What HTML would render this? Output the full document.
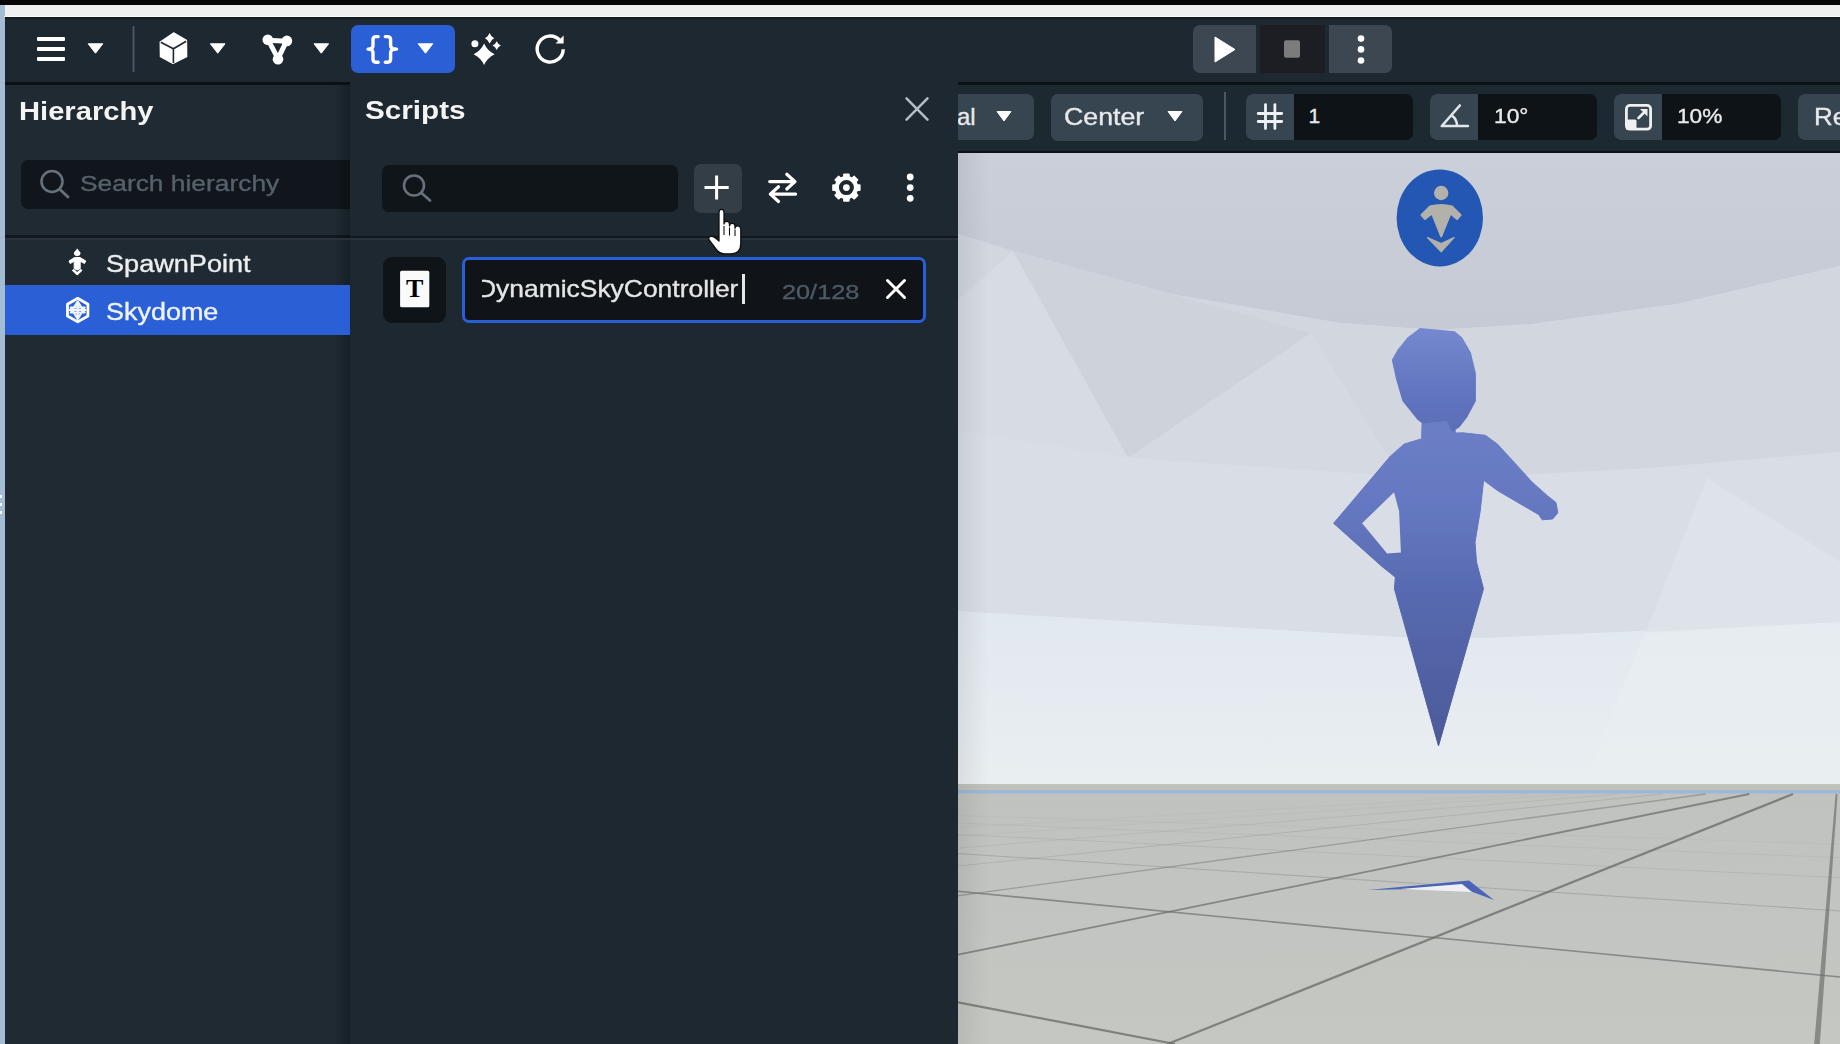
<!DOCTYPE html>
<html><head><meta charset="utf-8">
<style>
*{margin:0;padding:0;box-sizing:border-box}
html,body{width:1840px;height:1044px;overflow:hidden;background:#1e2931;font-family:"Liberation Sans",sans-serif;color:#fff}
.a{position:absolute}
.t{position:absolute;white-space:nowrap;line-height:1;transform-origin:0 0}
svg.i{position:absolute;overflow:visible}
</style></head><body>
<div class="a" style="left:0;top:0;width:1840px;height:5px;background:#060606"></div>
<div class="a" style="left:4px;top:5px;width:1836px;height:12px;background:#efefef"></div>
<div class="a" style="left:0;top:5px;width:5px;height:1039px;background:#a5bcd5"></div>
<div class="a" style="left:0;top:495px;width:2px;height:2.5px;background:#f4f6f8"></div>
<div class="a" style="left:0;top:503px;width:2px;height:2.5px;background:#f4f6f8"></div>
<div class="a" style="left:0;top:511px;width:2px;height:2.5px;background:#f4f6f8"></div>
<div class="a" style="left:5px;top:17px;width:1835px;height:65px;background:#1d2830"></div>
<div class="a" style="left:4px;top:15.5px;width:1836px;height:1.5px;background:#fafafa"></div>
<div class="a" style="left:5px;top:17px;width:1835px;height:1.5px;background:#151d23"></div>
<div class="a" style="left:5px;top:82px;width:345px;height:962px;background:#1f2a32"></div>
<div class="a" style="left:5px;top:82px;width:345px;height:3px;background:#0c1115"></div>
<div class="a" style="left:21px;top:160px;width:329px;height:49px;background:#10161b;border-radius:7px 0 0 7px"></div>
<div class="a" style="left:5px;top:235px;width:345px;height:3px;background:#12181d"></div>
<div class="a" style="left:334px;top:85px;width:16px;height:959px;background:linear-gradient(90deg,rgba(0,0,0,0),rgba(0,0,0,0.25))"></div>
<div class="a" style="left:5px;top:285px;width:345px;height:50px;background:#2a5fd6"></div>
<div class="a" style="left:5px;top:238px;width:345px;height:2px;background:#28323a"></div>
<div class="a" style="left:350px;top:82px;width:608px;height:962px;background:#1e2830"></div>
<div class="a" style="left:382px;top:165px;width:296px;height:47px;background:#0f1519;border-radius:7px"></div>
<div class="a" style="left:694px;top:164px;width:48px;height:49px;background:#343e47;border-radius:7px"></div>
<div class="a" style="left:350px;top:236px;width:608px;height:2px;background:#12181c"></div>
<div class="a" style="left:350px;top:238px;width:608px;height:2px;background:#28323a"></div>
<div class="a" style="left:383px;top:257px;width:63px;height:66px;background:#0e1418;border-radius:9px"></div>
<div class="a" style="left:462px;top:257px;width:464px;height:66px;background:#101418;border:3px solid #2a5ed6;border-radius:7px"></div>
<div class="a" style="left:958px;top:82px;width:882px;height:71px;background:#1d2931"></div>
<div class="a" style="left:958px;top:82px;width:882px;height:3px;background:#0c1115"></div>
<div class="a" style="left:958px;top:151px;width:882px;height:2px;background:#0c1115"></div>
<div class="a" style="left:958px;top:94px;width:76px;height:46px;background:#364550;border-radius:0 7px 7px 0"></div>
<div class="a" style="left:1051px;top:94px;width:152px;height:47px;background:#364550;border-radius:7px"></div>
<div class="a" style="left:1224px;top:92px;width:2px;height:48px;background:#4b5864"></div>
<div class="a" style="left:1246px;top:94px;width:167px;height:46px;background:#0d1317;border-radius:7px"></div>
<div class="a" style="left:1246px;top:94px;width:48px;height:46px;background:#364550;border-radius:7px 0 0 7px"></div>
<div class="a" style="left:1430px;top:94px;width:167px;height:46px;background:#0d1317;border-radius:7px"></div>
<div class="a" style="left:1430px;top:94px;width:48px;height:46px;background:#364550;border-radius:7px 0 0 7px"></div>
<div class="a" style="left:1614px;top:94px;width:167px;height:46px;background:#0d1317;border-radius:7px"></div>
<div class="a" style="left:1614px;top:94px;width:48px;height:46px;background:#364550;border-radius:7px 0 0 7px"></div>
<div class="a" style="left:1798px;top:94px;width:60px;height:46px;background:#364550;border-radius:7px"></div>
<div class="a" style="left:351px;top:25px;width:104px;height:48px;background:#2b5fd6;border-radius:7px"></div>
<div class="a" style="left:1193px;top:25px;width:63px;height:48px;background:#3c4752;border-radius:7px 0 0 7px"></div>
<div class="a" style="left:1260px;top:25px;width:65px;height:48px;background:#1c1e23"></div>
<div class="a" style="left:1329px;top:25px;width:63px;height:48px;background:#3c4752;border-radius:0 7px 7px 0"></div>
<svg class="i" style="left:0;top:0" width="1840" height="1044" viewBox="0 0 1840 1044">
<defs><clipPath id="vpc"><rect x="958" y="153" width="882" height="891"/></clipPath><linearGradient id="fig" x1="0" y1="0" x2="0" y2="1"><stop offset="0" stop-color="#6c7fc7"/><stop offset="0.3" stop-color="#6477c0"/><stop offset="0.55" stop-color="#5769b0"/><stop offset="1" stop-color="#4b5a98"/></linearGradient><linearGradient id="floorg" x1="0" y1="0" x2="0" y2="1"><stop offset="0" stop-color="#bfc2be"/><stop offset="1" stop-color="#c4c7c2"/></linearGradient><linearGradient id="vign" x1="0" y1="0" x2="1" y2="0"><stop offset="0" stop-color="#000" stop-opacity="0.07"/><stop offset="1" stop-color="#000" stop-opacity="0"/></linearGradient><linearGradient id="headg" x1="0" y1="0" x2="0" y2="1"><stop offset="0" stop-color="#7589d0"/><stop offset="0.6" stop-color="#6275bf"/><stop offset="1" stop-color="#5b6db8"/></linearGradient><filter id="soft" x="-5%" y="-5%" width="110%" height="110%"><feGaussianBlur stdDeviation="0.7"/></filter><linearGradient id="ringg" x1="0" y1="153" x2="0" y2="330" gradientUnits="userSpaceOnUse"><stop offset="0" stop-color="#cbcfd9"/><stop offset="1" stop-color="#c5cad5"/></linearGradient><linearGradient id="lowg" x1="0" y1="611" x2="0" y2="784" gradientUnits="userSpaceOnUse"><stop offset="0" stop-color="#e1e8ef"/><stop offset="1" stop-color="#e9eef1"/></linearGradient></defs>
<g clip-path="url(#vpc)">
<rect x="958" y="153" width="882" height="631" fill="#d4d9e1"/>
<polygon points="958.0,153.0 958.0,234.0 1013.0,251.0 1171.0,294.0 1340.0,323.0 1436.0,330.0 1532.0,324.0 1677.0,304.0 1840.0,266.0 1840.0,153.0" fill="url(#ringg)"/>
<polygon points="958.0,234.0 1013.0,251.0 1171.0,294.0 1340.0,323.0 1436.0,330.0 1532.0,324.0 1677.0,304.0 1840.0,266.0 1840.0,452.0 1650.0,468.0 1480.0,477.0 1400.0,476.0 1130.0,455.0 958.0,430.0" fill="#d2d7df"/>
<polygon points="958.0,430.0 1130.0,455.0 1400.0,476.0 1480.0,477.0 1650.0,468.0 1840.0,452.0 1840.0,622.0 1480.0,638.0 1400.0,637.0 958.0,611.0" fill="#d9dee6"/>
<polygon points="958.0,611.0 1400.0,637.0 1480.0,638.0 1840.0,622.0 1840.0,784.0 958.0,784.0" fill="url(#lowg)"/>
<polygon points="1013.0,251.0 1311.0,333.0 1128.0,458.0" fill="#cdd2db"/>
<polygon points="958.0,300.0 1013.0,251.0 1128.0,458.0 958.0,430.0" fill="#d7dbe3"/>
<polygon points="1128.0,458.0 1311.0,333.0 1400.0,476.0" fill="#d5dae2"/>
<polygon points="1645.0,634.0 1707.0,478.0 1840.0,562.0 1840.0,622.0" fill="#dee3ea"/>
<polygon points="1645.0,632.0 1840.0,622.0 1840.0,784.0 1583.0,784.0" fill="#e9eef2" opacity="0.6"/>
<rect x="958" y="784" width="882" height="260" fill="url(#floorg)"/>
<rect x="958" y="784" width="882" height="6" fill="#bfc2ba"/>
<rect x="958" y="790" width="882" height="3.5" fill="#9fb7d6"/>
<line x1="1167.5" y1="1044" x2="1793.0" y2="794" stroke="#6c716c" stroke-width="2.2" stroke-opacity="0.8"/>
<line x1="518.0" y1="1044" x2="1749.3" y2="794" stroke="#6c716c" stroke-width="1.8" stroke-opacity="0.75"/>
<line x1="-131.5" y1="1044" x2="1705.7" y2="794" stroke="#6c716c" stroke-width="1.3" stroke-opacity="0.45"/>
<line x1="-781.0" y1="1044" x2="1662.1" y2="794" stroke="#6c716c" stroke-width="1.0" stroke-opacity="0.2"/>
<line x1="-1430.5" y1="1044" x2="1618.5" y2="794" stroke="#6c716c" stroke-width="0.9" stroke-opacity="0.12"/>
<line x1="-2080.0" y1="1044" x2="1574.9" y2="794" stroke="#6c716c" stroke-width="0.8" stroke-opacity="0.08"/>
<line x1="-2729.5" y1="1044" x2="1531.2" y2="794" stroke="#6c716c" stroke-width="0.8" stroke-opacity="0.06"/>
<polygon points="1814.2,1044 1819.8,1044 1837.6,794 1835.6,794" fill="#80847f" opacity="0.9"/>
<line x1="1175.0" y1="1044" x2="-128.4" y2="794" stroke="#6c716c" stroke-width="2.2" stroke-opacity="0.8"/>
<line x1="2529.0" y1="1044" x2="-42.2" y2="794" stroke="#6c716c" stroke-width="1.6" stroke-opacity="0.7"/>
<line x1="3883.0" y1="1044" x2="44.0" y2="794" stroke="#6c716c" stroke-width="1.1" stroke-opacity="0.3"/>
<line x1="5237.0" y1="1044" x2="130.3" y2="794" stroke="#6c716c" stroke-width="0.9" stroke-opacity="0.15"/>
<line x1="6591.0" y1="1044" x2="216.5" y2="794" stroke="#6c716c" stroke-width="0.8" stroke-opacity="0.1"/>
<line x1="7945.0" y1="1044" x2="302.7" y2="794" stroke="#6c716c" stroke-width="0.8" stroke-opacity="0.07"/>
<polygon points="1368.0,890.0 1469.0,880.5 1494.0,900.0 1462.0,888.0" fill="#4d63b8"/>
<polygon points="1400.0,889.0 1462.0,884.0 1472.0,892.0" fill="#eef0f6"/>
<rect x="958" y="153" width="30" height="891" fill="url(#vign)"/>
<ellipse cx="1439.8" cy="217.9" rx="43.2" ry="48.5" fill="#2357b3"/>
<circle cx="1441.2" cy="193" r="7.2" fill="#b3b1ab"/>
<path d="M1421.5 215 L1430 206.5 Q1441 203.5 1452 206.5 L1460.5 215 L1457 219 L1450.5 213.5 L1441.2 236.5 L1432 213.5 L1425 219 Z" fill="#b3b1ab" stroke="#b3b1ab" stroke-width="2" stroke-linejoin="round"/>
<path d="M1427.5 237.5 L1441.2 243.5 L1454 237.5 L1441.2 251.8 Z" fill="#b3b1ab" stroke="#b3b1ab" stroke-width="1.2" stroke-linejoin="round"/>
<g filter="url(#soft)">
<polygon points="1421.6,438.8 1422.4,412.0 1448.0,412.0 1456.0,433.0 1462.9,432.8 1485.3,435.3 1497.4,444.0 1514.7,462.9 1531.9,481.9 1547.4,495.7 1556.0,502.6 1557.8,512.9 1552.6,519.0 1542.2,519.8 1538.8,514.7 1497.4,490.5 1483.6,480.2 1480.2,511.2 1475.0,542.2 1476.5,562.0 1483.5,588.8 1438.5,745.9 1394.4,588.8 1395.3,577.3 1390.5,573.3 1381.9,566.4 1333.6,523.3 1390.5,456.0 1404.3,444.0" fill="url(#fig)" stroke="url(#fig)" stroke-width="1" stroke-linejoin="round"/>
<polygon points="1362.1,523.3 1394.0,492.2 1399.1,511.2 1400.9,552.6 1387.1,553.4" fill="#d9dee6"/>
<polygon points="1419.9,328.1 1454.7,331.2 1462.2,337.4 1470.9,352.4 1475.9,373.6 1475.9,401.0 1467.2,417.2 1459.7,427.1 1452.3,432.0 1446.5,421.0 1422.4,423.4 1417.4,419.7 1402.4,401.0 1396.2,379.8 1391.8,359.9 1397.4,349.9 1407.4,337.4" fill="url(#headg)"/>
</g>
</g></svg>
<svg class="i" style="left:0;top:0" width="1840" height="340" viewBox="0 0 1840 340">
<rect x="37" y="37" width="28" height="4" rx="1" fill="#fff"/>
<rect x="37" y="47" width="28" height="4" rx="1" fill="#fff"/>
<rect x="37" y="57" width="28" height="4" rx="1" fill="#fff"/>
<path d="M88.2 43.8 L102.8 43.8 L95.5 53.2Z" fill="#fff" stroke="#fff" stroke-width="1" stroke-linejoin="round"/>
<path d="M210.39999999999998 43.8 L225.0 43.8 L217.7 53.2Z" fill="#fff" stroke="#fff" stroke-width="1" stroke-linejoin="round"/>
<path d="M314.0 43.8 L328.6 43.8 L321.3 53.2Z" fill="#fff" stroke="#fff" stroke-width="1" stroke-linejoin="round"/>
<path d="M418.2 43.8 L432.8 43.8 L425.5 53.2Z" fill="#fff" stroke="#fff" stroke-width="1" stroke-linejoin="round"/>
<rect x="132.5" y="26" width="2" height="46" fill="#4b5561"/>
<path d="M173.6 33 L186.4 40.3 L186.6 56.6 L173 63.3 L160.5 56.6 L160.3 42 Z" fill="#fff" stroke="#fff" stroke-width="1.5" stroke-linejoin="round"/>
<path d="M160.8 42.2 L173.4 48.8 L186.2 41.2 M173.4 48.8 V63" fill="none" stroke="#1d2830" stroke-width="1.6"/>
<path d="M268.3 40.2 L286.4 41.3 L278 58.7 Z" fill="none" stroke="#fff" stroke-width="5" stroke-linejoin="round"/>
<circle cx="267.8" cy="39.7" r="5.3" fill="#fff"/>
<circle cx="286.9" cy="40.9" r="5.3" fill="#fff"/>
<circle cx="278" cy="59.2" r="5.3" fill="#fff"/>
<path d="M378.2 36.6 H376 Q373 36.6 373 39.5 V45.5 Q373 49.1 368 49.1 Q373 49.1 373 52.7 V59.3 Q373 62.2 376 62.2 H378.2" fill="none" stroke="#fff" stroke-width="3.4" stroke-linecap="round" stroke-linejoin="round"/>
<path d="M385.3 36.6 H387.5 Q390.6 36.6 390.6 39.5 V45.5 Q390.6 49.1 396.6 49.1 Q390.6 49.1 390.6 52.7 V59.3 Q390.6 62.2 387.5 62.2 H385.3" fill="none" stroke="#fff" stroke-width="3.4" stroke-linecap="round" stroke-linejoin="round"/>
<path d="M484.1 43.5 Q487.46000000000004 50.843999999999994 494.6 54.3 Q487.46000000000004 57.756 484.1 65.1 Q480.74 57.756 473.6 54.3 Q480.74 50.843999999999994 484.1 43.5Z" fill="#fff"/>
<path d="M489.6 33.0 Q490.98 36.64 494.20000000000005 38.2 Q490.98 39.760000000000005 489.6 43.400000000000006 Q488.22 39.760000000000005 485.0 38.2 Q488.22 36.64 489.6 33.0Z" fill="#fff"/>
<path d="M496.7 41.2 Q497.96 44.28 500.9 45.6 Q497.96 46.92 496.7 50.0 Q495.44 46.92 492.5 45.6 Q495.44 44.28 496.7 41.2Z" fill="#fff"/>
<circle cx="474.9" cy="43.8" r="3.5" fill="#fff"/>
<path d="M563.2 49.2 A13 13 0 1 1 559.6 40.1" fill="none" stroke="#fff" stroke-width="3.4"/>
<path d="M563.6 35.6 V43.6 H555.6 Z" fill="#fff"/>
<path d="M1215 37 L1235 49.5 L1215 62 Z" fill="#fff" stroke="#fff" stroke-width="1" stroke-linejoin="round"/>
<rect x="1284" y="40.3" width="16" height="17.5" rx="2" fill="#7c7c7c"/>
<circle cx="1361" cy="38.6" r="3.3" fill="#fff"/>
<circle cx="1361" cy="49.4" r="3.3" fill="#fff"/>
<circle cx="1361" cy="60.5" r="3.3" fill="#fff"/>
<path d="M997 111.5 L1011 111.5 L1004 121 Z" fill="#fff" stroke="#fff" stroke-width="1" stroke-linejoin="round"/>
<path d="M1168 111.5 L1182 111.5 L1175 121 Z" fill="#fff" stroke="#fff" stroke-width="1" stroke-linejoin="round"/>
<path d="M1265.5 104.6 V128.6 M1274.9 104.6 V128.6 M1258.2 113.5 H1281.7 M1258.2 121.5 H1281.7" stroke="#eef2f5" stroke-width="2.8" stroke-linecap="round"/>
<path d="M1459.8 105.5 L1441.8 126 H1467.9 M1451.5 115.2 Q1457 119 1457.2 126" fill="none" stroke="#e2e6ea" stroke-width="2.6" stroke-linecap="round" stroke-linejoin="round"/>
<rect x="1626.4" y="105.4" width="24.2" height="23.8" rx="3.5" fill="none" stroke="#eef0f2" stroke-width="2.8"/>
<rect x="1626" y="119.5" width="10.5" height="10.5" rx="1.5" fill="#eef0f2"/>
<path d="M1638.5 118 L1645 111.5" stroke="#eef0f2" stroke-width="2.6" stroke-linecap="round"/>
<path d="M1647.5 109 V116.5 L1640 109Z" fill="#eef0f2"/>
<circle cx="52" cy="181.5" r="10.5" fill="none" stroke="#67717b" stroke-width="2.6"/>
<path d="M59.5 189 L68 197" stroke="#67717b" stroke-width="2.8" stroke-linecap="round"/>
<circle cx="414" cy="185.5" r="10" fill="none" stroke="#67717b" stroke-width="2.6"/>
<path d="M421.3 192.8 L430 200.5" stroke="#67717b" stroke-width="2.8" stroke-linecap="round"/>
<path d="M906.5 98.3 L927.5 119.7 M927.5 98.3 L906.5 119.7" stroke="#b6bcc4" stroke-width="2.5" stroke-linecap="round"/>
<path d="M716.6 175.5 V199.5 M704.5 187.5 H728.7" stroke="#fff" stroke-width="3"/>
<path d="M769.7 181.6 H794.5 M786.8 174.2 L795 181.6 L786.8 189 M795.6 194.1 H770.8 M778.5 186.7 L770.3 194.1 L778.5 201.5" fill="none" stroke="#fff" stroke-width="3.2" stroke-linecap="round" stroke-linejoin="round"/>
<rect x="-3.3" y="-14.2" width="6.6" height="6" rx="1" transform="translate(846.4 187.6) rotate(0)" fill="#fff"/>
<rect x="-3.3" y="-14.2" width="6.6" height="6" rx="1" transform="translate(846.4 187.6) rotate(45)" fill="#fff"/>
<rect x="-3.3" y="-14.2" width="6.6" height="6" rx="1" transform="translate(846.4 187.6) rotate(90)" fill="#fff"/>
<rect x="-3.3" y="-14.2" width="6.6" height="6" rx="1" transform="translate(846.4 187.6) rotate(135)" fill="#fff"/>
<rect x="-3.3" y="-14.2" width="6.6" height="6" rx="1" transform="translate(846.4 187.6) rotate(180)" fill="#fff"/>
<rect x="-3.3" y="-14.2" width="6.6" height="6" rx="1" transform="translate(846.4 187.6) rotate(225)" fill="#fff"/>
<rect x="-3.3" y="-14.2" width="6.6" height="6" rx="1" transform="translate(846.4 187.6) rotate(270)" fill="#fff"/>
<rect x="-3.3" y="-14.2" width="6.6" height="6" rx="1" transform="translate(846.4 187.6) rotate(315)" fill="#fff"/>
<circle cx="846.4" cy="187.6" r="9.6" fill="none" stroke="#fff" stroke-width="4.2"/>
<circle cx="846.4" cy="187.6" r="3.4" fill="#fff"/>
<circle cx="910.2" cy="177" r="3.4" fill="#fff"/>
<circle cx="910.2" cy="187.6" r="3.4" fill="#fff"/>
<circle cx="910.2" cy="198.3" r="3.4" fill="#fff"/>
<rect x="400.1" y="270.8" width="29.2" height="36.5" rx="1.5" fill="#fafafa"/>
<text x="414.7" y="297.4" text-anchor="middle" font-family="Liberation Serif" font-weight="bold" font-size="26" fill="#000">T</text>
<path d="M887.5 280.5 L904.5 297.5 M904.5 280.5 L887.5 297.5" stroke="#fff" stroke-width="3" stroke-linecap="round"/>
<path d="M77.2 248.6 L80.6 252.8 Q80.6 256 77.2 256.2 Q73.8 256 73.8 252.8 Z" fill="#fff"/>
<path d="M69 261 L74.5 257.5 H80 L85.8 261 L84.5 263.5 L80.2 261.2 V268.5 L77.2 270 L74.2 268.5 V261.2 L70.2 263.5Z" fill="#fff" stroke="#fff" stroke-width="1" stroke-linejoin="round"/>
<path d="M72.8 269.6 L77.2 273.8 L81.6 269.6" fill="none" stroke="#fff" stroke-width="2.6" stroke-linejoin="round"/>
<polygon points="77.70,298.30 87.92,304.20 87.92,316.00 77.70,321.90 67.48,316.00 67.48,304.20" fill="none" stroke="#fff" stroke-width="2.8" stroke-linejoin="round"/>
<path d="M77.7 301.5 L70.8 312.5 L84.6 312.5 Z M77.7 319 L70.8 307.5 L84.6 307.5Z M77.7 301 V319.5 M69 310 H86.4" fill="none" stroke="#f0f4ff" stroke-width="2.2" stroke-linejoin="round"/>
<path d="M719 241 V213 Q719 209.3 721.5 209.3 Q724 209.3 724 213 V224 Q724 221.3 726.8 221.3 Q729.5 221.3 729.5 224.2 V226 Q729.5 223.3 732.3 223.3 Q735 223.3 735 226.2 V228.3 Q735 225.8 737.8 225.8 Q740.8 225.8 740.8 229 V243.5 Q740.8 253.8 731 253.8 H724.5 Q719.5 253.8 716.3 249.5 L709.3 240.2 Q707.8 237.6 710.3 236.5 Q713 235.5 715.8 238.3 Z" fill="#fff" stroke="#0c0f12" stroke-width="1.3" stroke-linejoin="round"/>
<path d="M724 226 V235 M729.5 227.5 V235.5 M735 229.5 V236" stroke="#0c0f12" stroke-width="1.1"/>
</svg>
<div class="t" style="left:18.5px;top:98.2px;font-size:26.5px;font-weight:bold;color:#f4f4f4;transform:scaleX(1.1);">Hierarchy</div>

<div class="t" style="left:365.0px;top:97.0px;font-size:26.5px;font-weight:bold;color:#f4f4f4;transform:scaleX(1.12);">Scripts</div>

<div class="t" style="left:79.6px;top:173.0px;font-size:22px;-webkit-text-stroke:0.35px #56616b;color:#56616b;transform:scaleX(1.198);">Search hierarchy</div>

<div class="t" style="left:106.3px;top:252.9px;font-size:23px;-webkit-text-stroke:0.35px #eceef0;color:#eceef0;transform:scaleX(1.178);">SpawnPoint</div>

<div class="t" style="left:105.5px;top:300.8px;font-size:23px;-webkit-text-stroke:0.35px #eef2fb;color:#eef2fb;transform:scaleX(1.172);">Skydome</div>

<div class="a" style="left:481.5px;top:262px;width:300px;height:50px;overflow:hidden"><div class="t" style="left:-4.8px;top:15.3px;font-size:24px;-webkit-text-stroke:0.35px #e4e6e8;color:#e4e6e8;transform:scaleX(1.101);">DynamicSkyController</div>
</div>
<div class="a" style="left:742px;top:274px;width:2.5px;height:30px;background:#e4e6e8"></div>
<div class="t" style="left:782.0px;top:280.8px;font-size:21px;-webkit-text-stroke:0.35px #4e5a66;color:#4e5a66;transform:scaleX(1.204);">20/128</div>

<div class="a" style="left:958px;top:94px;width:100px;height:50px;overflow:hidden"><div class="t" style="left:-1.0px;top:10.7px;font-size:24px;-webkit-text-stroke:0.35px #e8eaec;color:#e8eaec;transform:scaleX(1.0);">al</div>
</div>
<div class="t" style="left:1064.1px;top:104.6px;font-size:24px;-webkit-text-stroke:0.35px #e8eaec;color:#e8eaec;transform:scaleX(1.114);">Center</div>

<div class="t" style="left:1308.5px;top:104.7px;font-size:21px;-webkit-text-stroke:0.35px #e8eaec;color:#e8eaec;transform:scaleX(1.0);">1</div>

<div class="t" style="left:1494.0px;top:105.0px;font-size:21px;-webkit-text-stroke:0.35px #e8eaec;color:#e8eaec;transform:scaleX(1.086);">10°</div>

<div class="t" style="left:1676.8px;top:105.0px;font-size:21px;-webkit-text-stroke:0.35px #e8eaec;color:#e8eaec;transform:scaleX(1.08);">10%</div>

<div class="t" style="left:1814.0px;top:104.5px;font-size:24px;-webkit-text-stroke:0.35px #e8eaec;color:#e8eaec;transform:scaleX(1.08);">Re</div>

</body></html>
